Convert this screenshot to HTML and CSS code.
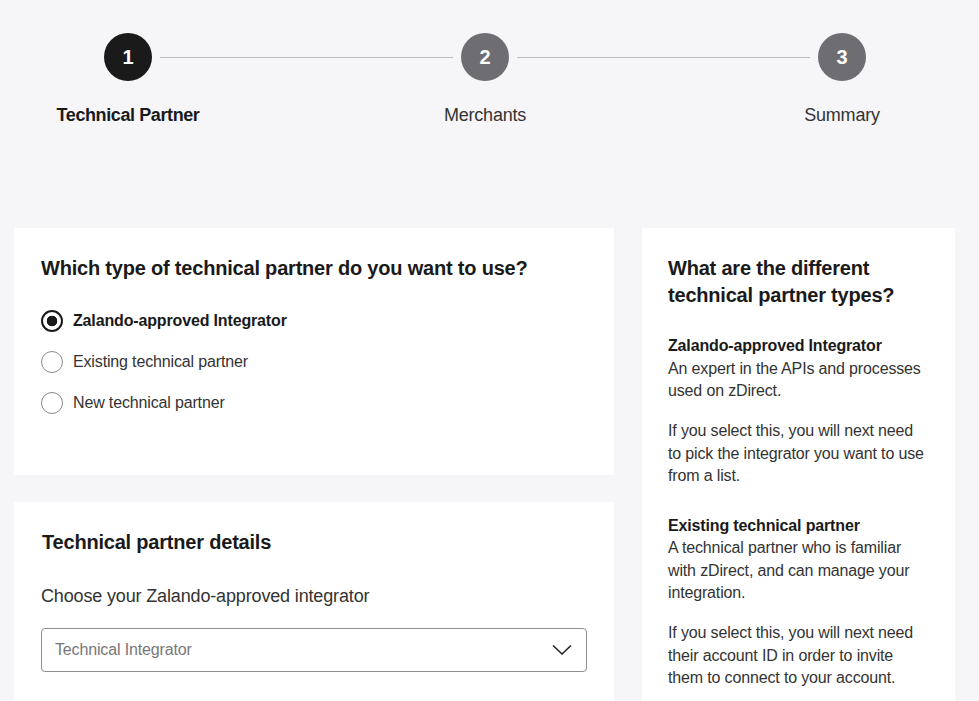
FILE: index.html
```html
<!DOCTYPE html>
<html lang="en">
  <head>
    <meta charset="UTF-8" />
    <title>Technical partner</title>
    <link rel="stylesheet" href="styles.css">
  </head>
  <body>
    <div class="stepper">
      <div class="step active">
        <div class="step-num">1</div>
        <div class="step-label">Technical Partner</div>
      </div>
      <div class="step-line"></div>
      <div class="step">
        <div class="step-num">2</div>
        <div class="step-label">Merchants</div>
      </div>
      <div class="step-line"></div>
      <div class="step">
        <div class="step-num">3</div>
        <div class="step-label">Summary</div>
      </div>
    </div>

    <div class="layout">
      <div class="main-col">
        <div class="card card-type">
          <h2>Which type of technical partner do you want to use?</h2>
          <div class="radios">
            <label class="radio checked"><span class="dot"></span>Zalando-approved Integrator</label>
            <label class="radio"><span class="dot"></span>Existing technical partner</label>
            <label class="radio"><span class="dot"></span>New technical partner</label>
          </div>
        </div>

        <div class="card card-details">
          <h2>Technical partner details</h2>
          <p class="field-label">Choose your Zalando-approved integrator</p>
          <div class="select">
            <span>Technical Integrator</span>
            <svg width="20" height="12" viewBox="0 0 20 12">
              <path d="M1 1.5 L10 10 L19 1.5" fill="none" stroke="#222" stroke-width="1.6" />
            </svg>
          </div>
        </div>
      </div>

      <div class="card side">
        <h2>What are the different technical partner types?</h2>
        <div class="info">
          <h3>Zalando-approved Integrator</h3>
          <p>An expert in the APIs and processes used on zDirect.</p>
          <p>If you select this, you will next need to pick the integrator you want to use from a list.</p>
        </div>
        <div class="info">
          <h3>Existing technical partner</h3>
          <p>A technical partner who is familiar with zDirect, and can manage your integration.</p>
          <p>If you select this, you will next need their account ID in order to invite them to connect to your account.</p>
        </div>
      </div>
    </div>
  </body>
</html>
```

FILE: styles.css
```css
body {
  margin: 0;
  background: #f6f6f8;
  font-family: "Liberation Sans", Arial, sans-serif;
  color: #1a1a1a;
  letter-spacing: -0.15px;
}
.stepper {
  display: flex;
  align-items: flex-start;
  width: 762px;
  margin-left: 104px;
  padding-top: 33px;
}
.step {
  display: flex;
  flex-direction: column;
  align-items: center;
  width: 48px;
}
.step-num {
  width: 48px;
  height: 48px;
  border-radius: 50%;
  background: #6e6e72;
  color: #fff;
  font-weight: bold;
  font-size: 20px;
  line-height: 48px;
  text-align: center;
}
.step.active .step-num {
  background: #1a1a1a;
}
.step-label {
  white-space: nowrap;
  margin-top: 23px;
  font-size: 18px;
  line-height: 22px;
  color: #333;
  letter-spacing: -0.2px;
}
.step.active .step-label {
  font-weight: bold;
  color: #1a1a1a;
  letter-spacing: -0.4px;
}
.step-line {
  flex: 1;
  height: 1px;
  background: #bdbdc0;
  margin: 24px 8px 0;
}
.layout {
  display: grid;
  grid-template-columns: 600px 313px;
  column-gap: 28px;
  padding-left: 14px;
  margin-top: 102px;
}
.main-col {
  display: flex;
  flex-direction: column;
  gap: 27px;
}
.card {
  background: #fff;
}
.card h2 {
  margin: 0;
  font-size: 20px;
  line-height: 27px;
  font-weight: bold;
  color: #1a1a1a;
  letter-spacing: -0.2px;
}
.card-type {
  height: 247px;
  box-sizing: border-box;
  padding: 27px 27px;
}
.radios {
  margin-top: 28px;
  display: flex;
  flex-direction: column;
  gap: 19px;
}
.radio {
  display: flex;
  align-items: center;
  gap: 10px;
  font-size: 16px;
  line-height: 22px;
  color: #333;
}
.radio .dot {
  width: 20px;
  height: 20px;
  border: 1px solid #8a8a8a;
  border-radius: 50%;
  box-sizing: content-box;
}
.radio.checked {
  font-weight: bold;
  color: #1a1a1a;
}
.radio.checked .dot {
  width: 18px;
  height: 18px;
  border: 2px solid #1a1a1a;
  background: radial-gradient(circle, #1a1a1a 0 5px, #fff 5.6px);
}
.card-details {
  padding: 27px 27px 30px 27px;
  height: 220px;
}
.card-details h2 {
  padding-left: 1px;
}
.field-label {
  margin: 27px 0 0;
  font-size: 18px;
  line-height: 26px;
  color: #333;
}
.select {
  margin-top: 19px;
  height: 44px;
  box-sizing: border-box;
  border: 1px solid #8e8e8e;
  border-radius: 4px;
  display: flex;
  align-items: center;
  justify-content: space-between;
  padding: 0 14px 0 13px;
  font-size: 16px;
  color: #777;
}
.side {
  padding: 27px 26px;
  align-self: start;
  min-height: 500px;
}
.info {
  margin-top: 26px;
}
.info + .info {
  margin-top: 27px;
}
.info h3 {
  margin: 0;
  font-size: 16px;
  line-height: 22.5px;
  font-weight: bold;
  color: #1a1a1a;
}
.info p {
  margin: 0 0 17.5px;
  font-size: 16px;
  line-height: 22.5px;
  color: #333;
}
.info p:last-child {
  margin-bottom: 0;
}
```
